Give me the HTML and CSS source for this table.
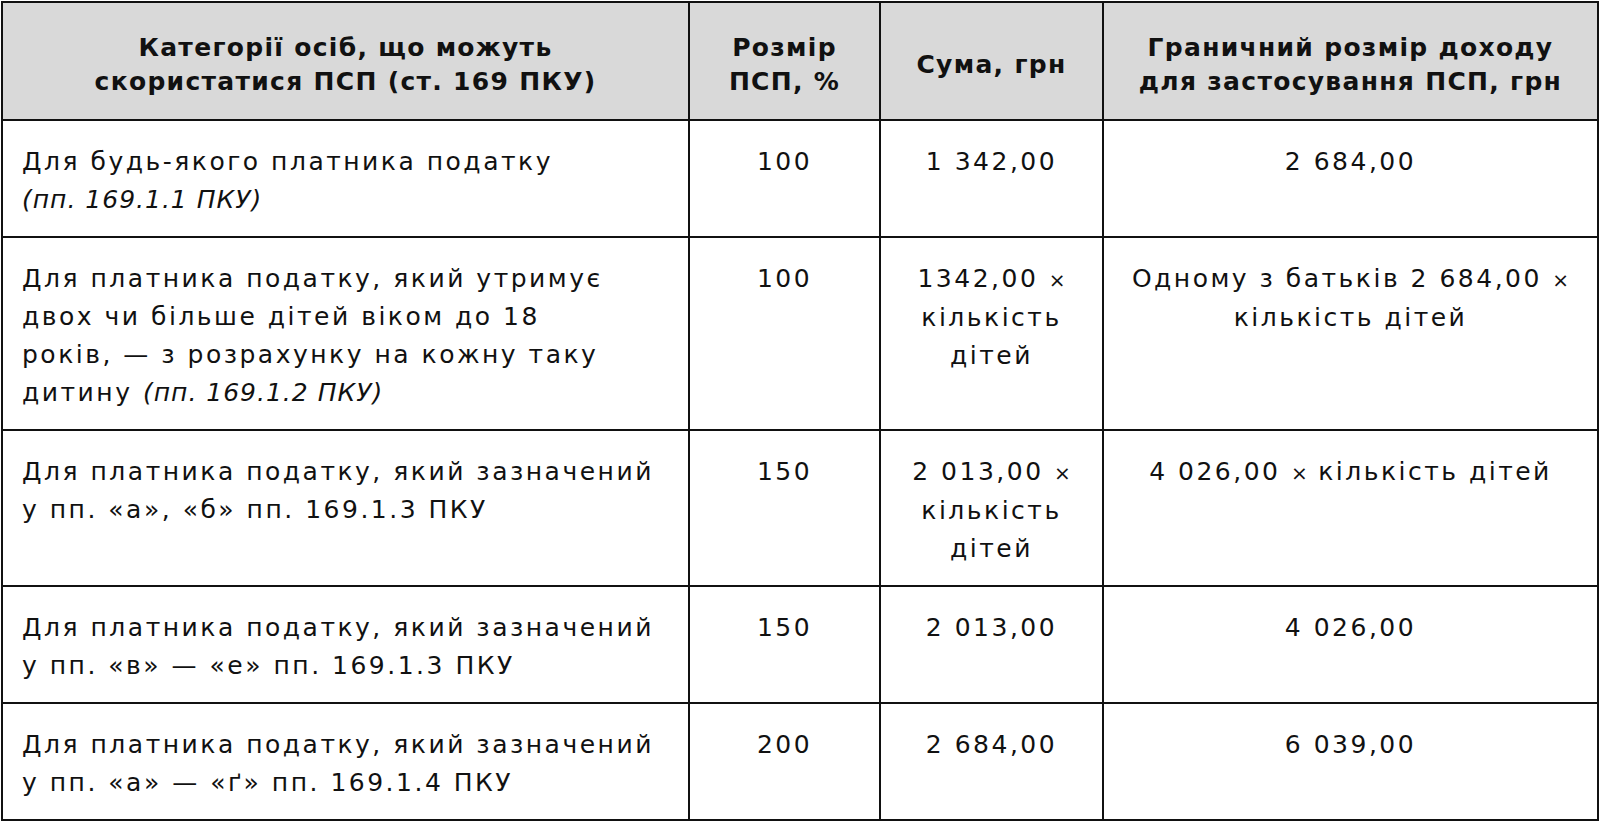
FILE: index.html
```html
<!DOCTYPE html>
<html lang="uk">
<head>
<meta charset="utf-8">
<link rel="stylesheet" href="styles.css">
</head>
<body>
<table class="psp">
  <colgroup>
    <col class="c1"><col class="c2"><col class="c3"><col class="c4">
  </colgroup>
  <thead>
    <tr>
      <th>Категорії осіб, що можуть<br>скористатися ПСП (ст. 169 ПКУ)</th>
      <th>Розмір<br>ПСП, %</th>
      <th>Сума, грн</th>
      <th>Граничний розмір доходу<br>для застосування ПСП, грн</th>
    </tr>
  </thead>
  <tbody>
    <tr>
      <td class="cat">Для будь-якого платника податку<br><i>(пп. 169.1.1 ПКУ)</i></td>
      <td>100</td>
      <td>1 342,00</td>
      <td>2 684,00</td>
    </tr>
    <tr>
      <td class="cat">Для платника податку, який утримує<br>двох чи більше дітей віком до 18<br>років, — з розрахунку на кожну таку<br>дитину <i>(пп. 169.1.2 ПКУ)</i></td>
      <td>100</td>
      <td>1342,00 <span class="x">×</span><br>кількість<br>дітей</td>
      <td>Одному з батьків 2 684,00 <span class="x">×</span><br>кількість дітей</td>
    </tr>
    <tr>
      <td class="cat">Для платника податку, який зазначений<br>у пп. «а», «б» пп. 169.1.3 ПКУ</td>
      <td>150</td>
      <td>2 013,00 <span class="x">×</span><br>кількість<br>дітей</td>
      <td>4 026,00 <span class="x">×</span> кількість дітей</td>
    </tr>
    <tr>
      <td class="cat">Для платника податку, який зазначений<br>у пп. «в» — «е» пп. 169.1.3 ПКУ</td>
      <td>150</td>
      <td>2 013,00</td>
      <td>4 026,00</td>
    </tr>
    <tr>
      <td class="cat">Для платника податку, який зазначений<br>у пп. «а» — «ґ» пп. 169.1.4 ПКУ</td>
      <td>200</td>
      <td>2 684,00</td>
      <td>6 039,00</td>
    </tr>
  </tbody>
</table>
</body>
</html>
```

FILE: styles.css
```css
html, body {
  margin: 0;
  padding: 0;
  background: #fff;
}
body {
  padding: 1px;
  font-family: "DejaVu Sans", "Noto Sans", sans-serif;
  color: #111;
}
.psp {
  border-collapse: collapse;
  width: 1598px;
  table-layout: fixed;
  font-size: 25px;
  line-height: 38px;
}
.c1 { width: 687px; }
.c2 { width: 191px; }
.c3 { width: 223px; }
.c4 { width: auto; }
.psp th, .psp td {
  border: 2px solid #111;
  text-align: center;
}
.psp th {
  background: #d9d9d9;
  font-weight: 700;
  height: 108px;
  padding: 8px 4px 0;
  line-height: 34px;
  letter-spacing: 1.3px;
  vertical-align: middle;
}
.psp td {
  vertical-align: top;
  padding: 22px 4px 17px;
  font-weight: 400;
  letter-spacing: 2.5px;
}
.psp td.cat {
  text-align: left;
  padding-left: 19px;
}
.psp td i {
  letter-spacing: 1px;
}
.x {
  font-size: 0.8em;
  letter-spacing: 0;
}
```
